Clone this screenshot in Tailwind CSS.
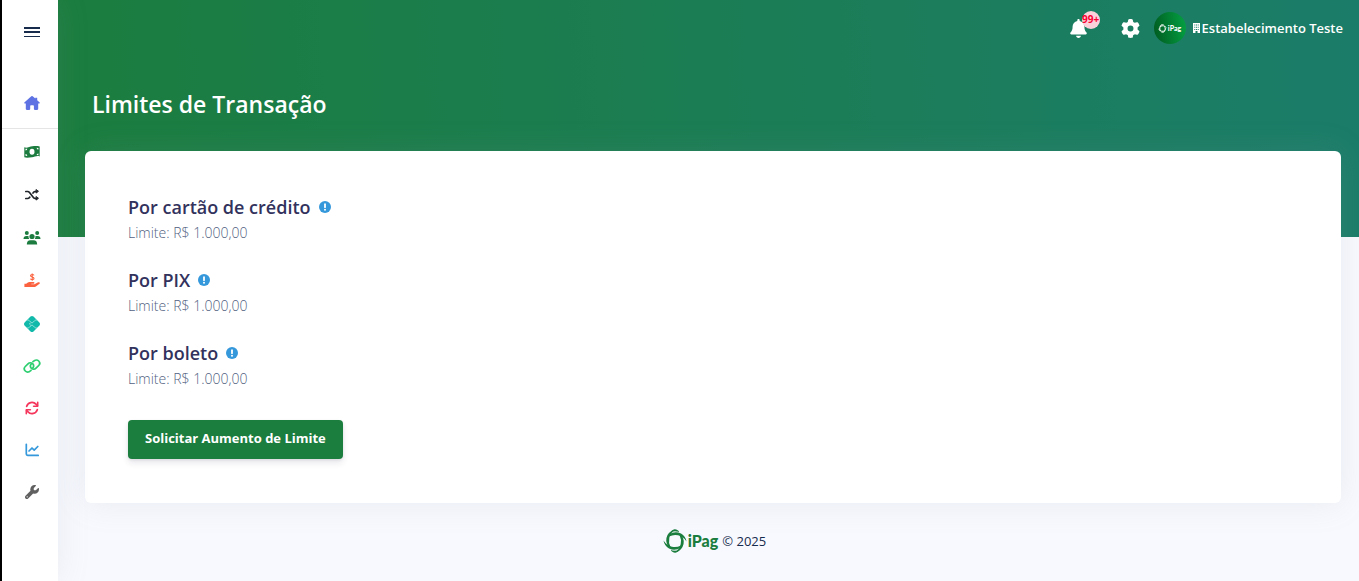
<!DOCTYPE html>
<html lang="pt-BR">
<head>
  <meta charset="UTF-8" />
  <meta name="viewport" content="width=device-width, initial-scale=1.0" />
  <title>Limites de Transação</title>
  <script src="https://cdn.jsdelivr.net/npm/@tailwindcss/browser@4"></script>
</head>
<body class="bg-[#f8f9fe] font-['Open_Sans',sans-serif] text-sm text-[#32325d]">

  <!-- Shared shapes -->
  <svg class="hidden">
    <symbol id="ring" viewBox="0 0 24 24">
      <g fill="currentColor">
        <path d="M8 2.600Q12-1.400 16 2.600Q12 1.600 8 2.600zM8 21.400Q12 25.400 16 21.400Q12 22.400 8 21.400z" stroke="currentColor" stroke-width=".5" />
        <path id="blade" d="M6 5.500Q12 1.500 18 4.500Q22.500 7 23.500 12.500Q20 7.200 15 6.300Q10.500 5.300 6 7.500z" />
        <use href="#blade" transform="rotate(90 12 12)" />
        <use href="#blade" transform="rotate(180 12 12)" />
        <use href="#blade" transform="rotate(270 12 12)" />
      </g>
    </symbol>
    <symbol id="info" viewBox="0 0 12 12">
      <circle cx="6" cy="6" r="6" fill="currentColor" />
      <path d="M6 3.200v3" stroke="#fff" stroke-width="1.800" stroke-linecap="round" />
      <circle cx="6" cy="8.800" r="1" fill="#fff" />
    </symbol>
  </svg>

  <div class="flex min-h-screen">

    <!-- Sidebar -->
    <aside class="relative z-10 w-[58px] shrink-0 border-l-2 border-black bg-white pl-1 shadow-[0_0_32px_rgba(136,152,170,0.15)]">
      <button type="button" aria-label="Menu" class="flex h-16 w-full items-center justify-center text-[#172b4d]">
        <svg class="h-4 w-4" viewBox="0 0 16 16" fill="currentColor"><path d="M0 3h16v2H0zM0 7h16v2H0zM0 12h16v1H0z" /></svg>
      </button>
      <nav>
        <a href="#" aria-label="Início" class="-ml-1 mt-3 flex h-[53px] items-center justify-center border-b border-[#e5e5e5] pt-0.5 pl-1 text-[#5e72e4]">
          <svg class="h-4 w-4" viewBox="0 0 16 16" fill="currentColor"><path d="M7.300 1.300a1 1 0 0 1 1.400 0l2.600 2.200V2.700h1.900v2.500l2.200 2c.8.700.5 1.300-.2 1.300h-1v5.300c0 .7-.4 1.100-1 1.100h-2.500c-.5 0-.8-.3-.8-.8V11c0-.5-.3-.8-.8-.8H7c-.5 0-.8.3-.8.8v3.100c0 .5-.3.800-.8.800H2.800c-.6 0-1-.4-1-1.100V8.500h-1c-.7 0-1-.6-.2-1.300z" /></svg>
        </a>
        <a href="#" aria-label="Transações" class="mt-px flex h-[43px] items-center justify-center text-[#1c7c3f]">
          <svg class="h-4 w-4" viewBox="0 0 16 16"><path d="M.3 3.300c2.600 1.500 5.300-1 8-1 2.600-.3 5-.5 7.400.3v9.800c-2.600-1.300-5 .5-7.700.8-2.600.2-5.200.9-7.700 0z" fill="currentColor" /><ellipse cx="8" cy="7.800" rx="2.500" ry="3" fill="#fff" /><path d="M1.500 4.700h1.800q0 1.600-1.800 1.700zM14.400 4v1.600q-1.700 0-1.800-1.900zM1.500 10q1.800.2 1.800 1.900l-1.800-.2zM14.400 9.500v1.700l-1.800-.1q.1-1.600 1.800-1.600z" fill="#fff" /></svg>
        </a>
        <a href="#" aria-label="Split" class="flex h-[43px] items-center justify-center text-[#212529]">
          <svg class="h-4 w-4" viewBox="0 0 16 16" fill="none" stroke="currentColor" stroke-width="1.700" stroke-linecap="round"><path d="M1.800 4.500h1.900c.7 0 1.200.3 1.600.8l4.300 5.400c.4.500.9.800 1.600.8h1.500M1.800 11.500h1.900c.7 0 1.200-.3 1.600-.8l.5-.6M9 6.100l.6-.8c.4-.5.900-.8 1.600-.8h1.500" /><path d="M12 2.900v3.200l2.200-1.600zM12 9.900v3.200l2.200-1.600z" fill="currentColor" stroke-width="1" stroke-linejoin="round" /></svg>
        </a>
        <a href="#" aria-label="Clientes" class="flex h-[43px] items-center justify-center text-[#1c7c3f]">
          <svg class="h-4 w-[18px]" viewBox="0 0 18 16" fill="currentColor"><circle cx="3.800" cy="3" r="2" /><circle cx="14.200" cy="3" r="2" /><circle cx="9" cy="6.500" r="2.600" /><path d="M.5 9q0-3 2.900-3H5.500Q5.300 7.800 6.300 9zM17.500 9q0-3-2.900-3H12.500Q12.700 7.800 11.700 9zM3.800 14.500q0-4.300 3.700-4.300h3q3.700 0 3.700 4.300z" /></svg>
        </a>
        <a href="#" aria-label="Recebimentos" class="flex h-[43px] items-center justify-center text-[#fb6340]">
          <svg class="h-4 w-4" viewBox="0 0 16 16" fill="currentColor"><path d="M10 2.400C9.600 1.200 6.600 1.200 6.500 2.700c0 1.700 3.500 1 3.500 2.700 0 1.500-3 1.500-3.700.4M8.200.4v7.300" fill="none" stroke="currentColor" stroke-width="1.100" /><path d="M.4 10.800h1.800l1.300-1c.6-.5 1.300-.7 2-.7h4c1.300 0 1.300 1.700 0 1.700H7.300v.5h3.200l3.600-2c1.400-.6 2.300.6 1.400 1.500l-3.600 2.600c-.6.500-1.200.7-2 .7H.4z" /></svg>
        </a>
        <a href="#" aria-label="Pix" class="flex h-[43px] items-center justify-center text-[#11b9ab]">
          <svg class="h-4 w-4" viewBox="0 0 16 16"><path d="M6.500.6Q8-.6 9.500.6L15.400 6.500Q16.600 8 15.400 9.500L9.500 15.400Q8 16.600 6.500 15.400L.6 9.500Q-.6 8 .6 6.500z" fill="currentColor" /><path d="M3.300 4.100h.8q.7 0 1.200.5l2 2q.7.6 1.400 0l2-2q.5-.5 1.200-.5h.8M3.300 11.900h.8q.7 0 1.200-.5l2-2q.7-.6 1.400 0l2 2q.5.5 1.200.5h.8M6.800 6.600L5.400 8l1.400 1.400M9.200 6.600" fill="none" stroke="#a5e5df" stroke-width=".9" /></svg>
        </a>
        <a href="#" aria-label="Links de pagamento" class="flex h-[42px] items-center justify-center text-[#2dce70]">
          <svg class="h-4 w-[18px]" viewBox="0 0 18 16" fill="none" stroke="currentColor" stroke-width="1.700" stroke-linecap="round"><path d="M8 12.300C5.700 14.600 3.500 14.200 2.300 13 1.100 11.800 1 9.800 2.300 8.500L5 5.800C6.300 4.500 8.400 4.500 9.600 5.700c1.200 1.200 1.200 3.100.1 4.400" /><path d="M10 3.700C12.300 1.400 14.500 1.800 15.700 3c1.200 1.200 1.300 3.200 0 4.500L13 10.200C11.700 11.500 9.600 11.500 8.400 10.300 7.200 9.100 7.200 7.200 8.300 5.900" /></svg>
        </a>
        <a href="#" aria-label="Assinaturas" class="flex h-[42px] items-center justify-center text-[#f5365c]">
          <svg class="h-4 w-4" viewBox="0 0 16 16" fill="none" stroke="currentColor" stroke-width="1.800" stroke-linecap="round"><path d="M2.700 6.300A5.500 5.500 0 0 1 12 4.200L13.300 5.500M13.300 9.700A5.500 5.500 0 0 1 4 11.800L2.700 10.500" /><path d="M13.700 2.200v4.100H9.600M2.300 13.800V9.700h4.100" stroke-width="1.600" stroke-linejoin="round" /></svg>
        </a>
        <a href="#" aria-label="Relatórios" class="flex h-[42px] items-center justify-center text-[#3498db]">
          <svg class="h-4 w-4" viewBox="0 0 16 16" fill="none" stroke="currentColor" stroke-width="1.700" stroke-linecap="round" stroke-linejoin="round"><path d="M2.300 2.300v9.800c0 .8.500 1.300 1.300 1.300h10.600M5 9l3-3 2.200 2.100 3.600-3.600" /></svg>
        </a>
        <a href="#" aria-label="Configurações" class="flex h-[42px] items-center justify-center text-[#606060]">
          <svg class="h-3.5 w-3.5" viewBox="0 0 512 512" fill="currentColor"><path d="M352 320c88.400 0 160-71.600 160-160c0-15.300-2.200-30.100-6.200-44.200c-3.100-10.800-16.400-13.200-24.300-5.300l-76.800 76.800c-3 3-7.100 4.700-11.300 4.700H336c-8.800 0-16-7.200-16-16V118.600c0-4.200 1.700-8.300 4.700-11.300l76.800-76.800c7.900-7.900 5.400-21.200-5.300-24.300C382.100 2.200 367.300 0 352 0C263.600 0 192 71.600 192 160c0 19.100 3.400 37.500 9.500 54.500L19.900 396.100C7.200 408.800 0 426.100 0 444.100C0 481.600 30.400 512 67.900 512c18 0 35.300-7.200 48-19.900L297.500 310.500c17 6.200 35.400 9.500 54.500 9.500zM80 408a24 24 0 1 1 0 48 24 24 0 1 1 0-48z" /></svg>
        </a>
      </nav>
    </aside>

    <div class="min-w-0 flex-1">

      <!-- Header -->
      <header class="h-[237px] bg-[linear-gradient(87deg,#1b7d3e,#1b7d69)] text-white">
        <div class="flex h-14 items-center justify-end pr-4">
          <button type="button" aria-label="Notificações" class="relative mr-[34px]">
            <svg class="h-[19px] w-[17px]" viewBox="0 0 448 512" fill="currentColor"><path d="M224 0c-17.700 0-32 14.300-32 32V51.200C119 66 64 130.600 64 208v18.800c0 47-17.300 92.400-48.500 127.600l-7.400 8.300c-8.400 9.400-10.400 22.900-5.300 34.400S19.400 416 32 416H416c12.600 0 24-7.400 29.200-18.900s3.100-25-5.300-34.400l-7.400-8.300C401.300 319.200 384 273.900 384 226.800V208c0-77.400-55-142-128-156.800V32c0-17.700-14.300-32-32-32zm45.300 493.300c12-12 18.700-28.300 18.700-45.300H224 160c0 17 6.700 33.300 18.700 45.300s28.300 18.700 45.300 18.700s33.300-6.700 45.300-18.700z" /></svg>
            <span class="absolute -top-2 left-3 flex h-[18px] w-[18px] items-center justify-center rounded-full bg-[#fdd1da] text-[10px] font-bold text-[#f80031]">99+</span>
          </button>
          <button type="button" aria-label="Ajustes" class="mr-3.5">
            <svg class="h-[19px] w-[19px]" viewBox="0 0 512 512" fill="currentColor"><path d="M495.900 166.600c3.200 8.700 .5 18.400-6.400 24.600l-43.300 39.400c1.100 8.300 1.700 16.800 1.700 25.400s-.6 17.100-1.700 25.400l43.300 39.400c6.900 6.200 9.600 15.900 6.400 24.600c-4.400 11.900-9.700 23.300-15.800 34.300l-4.700 8.100c-6.600 11-14 21.400-22.100 31.200c-5.900 7.200-15.700 9.600-24.500 6.800l-55.700-17.700c-13.400 10.300-28.200 18.900-44 25.400l-12.500 57.100c-2 9.100-9 16.300-18.200 17.800c-13.800 2.300-28 3.500-42.500 3.500s-28.700-1.200-42.500-3.500c-9.200-1.500-16.200-8.700-18.200-17.800l-12.500-57.100c-15.800-6.500-30.600-15.100-44-25.400L83.100 425.900c-8.800 2.800-18.600 .3-24.500-6.800c-8.100-9.800-15.500-20.200-22.100-31.200l-4.700-8.100c-6.100-11-11.400-22.400-15.800-34.300c-3.200-8.700-.5-18.400 6.400-24.600l43.300-39.400C64.600 273.100 64 264.600 64 256s.6-17.100 1.700-25.400L22.400 191.200c-6.900-6.200-9.600-15.900-6.400-24.600c4.400-11.900 9.700-23.300 15.800-34.300l4.700-8.100c6.600-11 14-21.400 22.100-31.200c5.900-7.200 15.700-9.600 24.500-6.800l55.700 17.700c13.400-10.300 28.200-18.900 44-25.400l12.500-57.100c2-9.100 9-16.300 18.200-17.800C227.300 1.200 241.500 0 256 0s28.700 1.200 42.500 3.500c9.200 1.500 16.200 8.700 18.200 17.800l12.500 57.100c15.800 6.500 30.600 15.100 44 25.400l55.700-17.700c8.800-2.800 18.600-.3 24.500 6.800c8.100 9.800 15.500 20.200 22.100 31.200l4.700 8.100c6.100 11 11.400 22.400 15.800 34.300zM256 336a80 80 0 1 0 0-160 80 80 0 1 0 0 160z" /></svg>
          </button>
          <a href="#" class="flex items-center">
            <span class="flex h-8 w-8 items-center justify-center rounded-full bg-[linear-gradient(80deg,#00591f,#04a344)]">
              <svg class="h-[9px] w-[9px]"><use href="#ring" /></svg>
              <span class="ml-px font-[Lato,sans-serif] text-[7px] font-black">iPag</span>
            </span>
            <svg class="ml-[7px] h-[10px] w-[7px]" viewBox="0 0 7 10"><path d="M0 0h7v10H4.500V8h-2v2H0z" fill="currentColor" /><path d="M1.300 1.500h1v1h-1zM3 1.500h1v1H3zM4.700 1.500h1v1h-1zM1.300 3.700h1v1h-1zM3 3.700h1v1H3zM4.700 3.700h1v1h-1zM1.300 5.900h1v1h-1zM3 5.900h1v1H3zM4.700 5.900h1v1h-1z" fill="#1b7d66" /></svg>
            <span class="ml-0.5 text-[13px] font-semibold">Estabelecimento Teste</span>
          </a>
        </div>
        <h1 class="pt-8 pl-[34px] text-[23px]/8 font-semibold">Limites de Transação</h1>
      </header>

      <!-- Limits -->
      <main class="-mt-[86px] mr-[18px] ml-[27px] rounded-md bg-white px-[43px] pt-[43px] pb-11 shadow-[0_0_32px_rgba(136,152,170,0.15)]">
        <section class="mb-[22px]">
          <h2 class="flex items-center gap-2 text-lg/[27px] font-semibold">Por cartão de crédito <svg class="mb-0.5 h-3 w-3 text-[#3498db]"><use href="#info" /></svg></h2>
          <p class="text-sm/6 font-light text-[#525f7f]">Limite: R$ 1.000,00</p>
        </section>
        <section class="mb-[22px]">
          <h2 class="flex items-center gap-2 text-lg/[27px] font-semibold">Por PIX <svg class="mb-0.5 h-3 w-3 text-[#3498db]"><use href="#info" /></svg></h2>
          <p class="text-sm/6 font-light text-[#525f7f]">Limite: R$ 1.000,00</p>
        </section>
        <section class="mb-[29px]">
          <h2 class="flex items-center gap-2 text-lg/[27px] font-semibold">Por boleto <svg class="mb-0.5 h-3 w-3 text-[#3498db]"><use href="#info" /></svg></h2>
          <p class="text-sm/6 font-light text-[#525f7f]">Limite: R$ 1.000,00</p>
        </section>
        <button type="button" class="block h-[39px] rounded bg-[#1b7d3e] px-[17px] pb-0.5 text-[13px] font-bold text-white shadow-[0_4px_6px_rgba(50,50,93,0.11),0_1px_3px_rgba(0,0,0,0.08)]">Solicitar Aumento de Limite</button>
      </main>

      <footer class="flex items-center justify-center pt-[26px] pr-4 pb-7 pl-7">
        <a href="#" class="flex items-center text-[#1b7d3e]">
          <svg class="h-6 w-6"><use href="#ring" /></svg>
          <span class="ml-px font-[Lato,sans-serif] text-base font-black">iPag</span>
        </a>
        <span class="ml-1 text-[13px] text-[#172b4d]">© 2025</span>
      </footer>
    </div>
  </div>

</body>
</html>
